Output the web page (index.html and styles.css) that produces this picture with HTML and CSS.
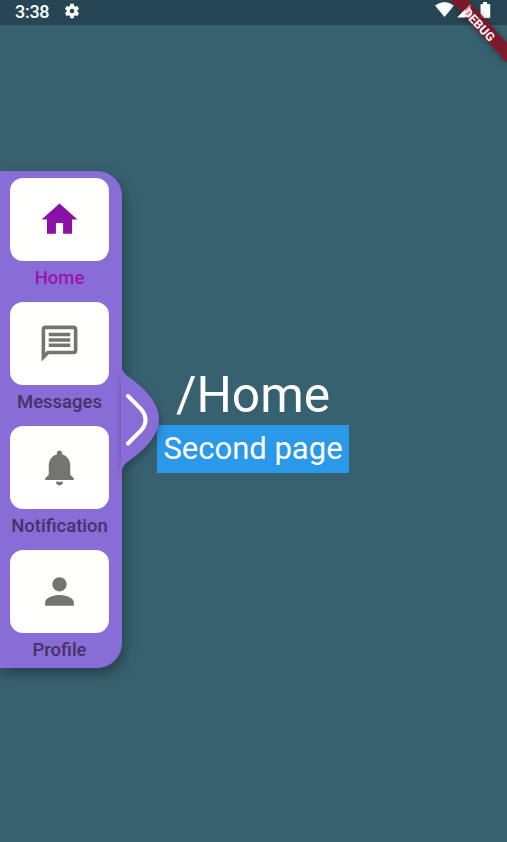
FILE: index.html
```html
<!DOCTYPE html>
<html lang="en">
<head>
<meta charset="utf-8">
<title>Home</title>
<link rel="stylesheet" href="styles.css">
</head>
<body>
<div class="screen">
  <header class="status">
    <span class="time">3:38</span>
    <svg class="gear" viewBox="0 0 24 24"><path d="M19.14 12.94c.04-.3.06-.61.06-.94s-.02-.64-.07-.94l2.03-1.58a.5.5 0 0 0 .12-.61l-1.92-3.32a.5.5 0 0 0-.59-.22l-2.39.96a7 7 0 0 0-1.62-.94l-.36-2.54a.48.48 0 0 0-.48-.41h-3.84a.47.47 0 0 0-.47.41l-.36 2.54c-.59.24-1.13.57-1.62.94l-2.39-.96a.48.48 0 0 0-.59.22L2.74 8.87a.47.47 0 0 0 .12.61l2.03 1.58a6 6 0 0 0 0 1.88l-2.03 1.58a.5.5 0 0 0-.12.61l1.92 3.32c.12.22.37.29.59.22l2.39-.96c.5.38 1.03.7 1.62.94l.36 2.54c.05.24.24.41.48.41h3.84c.24 0 .44-.17.47-.41l.36-2.54a7 7 0 0 0 1.62-.94l2.39.96c.22.08.47 0 .59-.22l1.92-3.32a.47.47 0 0 0-.12-.61zM12 15.100a3.100 3.100 0 1 1 0-6.200 3.100 3.100 0 0 1 0 6.200z"/></svg>
    <svg class="signals" viewBox="0 0 58 20"><path d="M0 5.500Q9.500-1.500 19 5.500L9.500 17Z"/><path d="M48 2h4v2h2.200q1 0 1 1V17q0 1-1 1H46.500q-1 0-1-1V5q0-1 1-1H48Z"/></svg>
  </header>

  <nav class="drawer">
    <a class="item active">
      <span class="card"><svg viewBox="0 0 24 24"><path d="M10 20v-6h4v6h5v-8h3L12 3 2 12h3v8z"/></svg></span>
      <span class="label">Home</span>
    </a>
    <a class="item">
      <span class="card"><svg viewBox="0 0 24 24"><path d="M4 4h16v12H5.170L4 17.170V4m0-2c-1.100 0-1.990.9-1.990 2L2 22l4-4h14c1.100 0 2-.9 2-2V4c0-1.100-.9-2-2-2H4zm2 10h12v2H6v-2zm0-3h12v2H6V9zm0-3h12v2H6V6z"/></svg></span>
      <span class="label">Messages</span>
    </a>
    <a class="item">
      <span class="card"><svg viewBox="0 0 24 24"><path d="M12 22c1.100 0 2-.9 2-2h-4c0 1.100.89 2 2 2zm6-6v-5c0-3.070-1.640-5.640-4.500-6.320V4c0-.83-.67-1.500-1.500-1.500s-1.500.67-1.500 1.500v.68C7.630 5.360 6 7.920 6 11v5l-2 2v1h16v-1l-2-2z"/></svg></span>
      <span class="label">Notification</span>
    </a>
    <a class="item">
      <span class="card"><svg viewBox="0 0 24 24"><path d="M12 12c2.210 0 4-1.790 4-4s-1.790-4-4-4-4 1.790-4 4 1.790 4 4 4zm0 2c-2.670 0-8 1.340-8 4v2h16v-2c0-2.660-5.330-4-8-4z"/></svg></span>
      <span class="label">Profile</span>
    </a>
    <svg class="handle" viewBox="0 0 40 120"><path class="tab" d="M0 4C0 14 2 18 8 22C22 32 38 47 38 64C38 81 22 96 8 106C2 110 0 114 0 124Z"/><path class="chevron" d="M7 41L20 54Q29 65 20 75.500L7 88.500"/></svg>
  </nav>

  <main class="content">
    <h1>/Home</h1>
    <button type="button">Second page</button>
  </main>

  <svg class="banner" viewBox="0 0 67 75"><path class="ribbon" d="M10 0H28L67 43V63Z"/><path class="cell" d="M17 17.500L25 9.500V17.500Z"/><path class="cell-covered" d="M25 9.500L30.500 4V17.500H25Z"/><text x="0" y="4.300" transform="translate(39 25) rotate(47)">DEBUG</text></svg>
</div>
</body>
</html>
```
FILE: styles.css
```css
* { box-sizing: border-box; }
body { margin: 0; font-family: Roboto, sans-serif; }
.screen {
  position: relative;
  width: 507px;
  height: 842px;
  overflow: hidden;
  background: #386170;
}
.status {
  display: flex;
  align-items: flex-start;
  height: 25px;
  padding-left: 15px;
  background: #274655;
  color: #fff;
}
.time { width: 48px; font-size: 18px; line-height: 23px; font-weight: 500; letter-spacing: -.3px; }
.gear { width: 18px; height: 18px; margin-top: 2px; fill: #fff; }
.signals { width: 58px; height: 20px; margin-left: auto; margin-right: 14px; fill: #fff; }
.drawer {
  position: absolute;
  left: 0;
  top: 171px;
  z-index: 2;
  display: flex;
  flex-direction: column;
  gap: 10px;
  width: 122px;
  height: 497px;
  padding: 7px 0 0 10px;
  border-radius: 0 25px 25px 0;
  background: #896dd6;
  box-shadow: 2px 6px 14px rgba(0, 0, 0, .34);
}
.item { width: 99px; height: 114px; color: #443268; }
.card {
  display: flex;
  align-items: center;
  justify-content: center;
  height: 83px;
  border-radius: 13px;
  background: #fffffd;
}
.card svg { width: 43px; height: 43px; fill: #747470; }
.label {
  display: flex;
  justify-content: center;
  padding-top: 6px;
  font-size: 18.5px;
  line-height: 22px;
  font-weight: 500;
  white-space: nowrap;
}
.active { color: #9815a8; }
.active .card svg { fill: #8b10a5; }
.handle {
  position: absolute;
  left: 121px;
  top: 184px;
  width: 40px;
  height: 120px;
  overflow: visible;
}
.tab { fill: #896dd6; filter: drop-shadow(1px 4px 4px rgba(0, 0, 0, .26)); }
.chevron { fill: none; stroke: #fff; stroke-width: 4; stroke-linecap: round; }
.content {
  display: flex;
  flex-direction: column;
  align-items: center;
  padding: 341px 1px 0 0;
  color: #fff;
}
h1 { margin: 0; font-size: 49.7px; line-height: 59px; font-weight: 400; }
button {
  width: 192px;
  height: 48px;
  padding: 0;
  border: 0;
  background: #2b99ea;
  color: #fff;
  font: 400 31px/48px Roboto, sans-serif;
}
.banner {
  position: absolute;
  top: 0;
  right: 0;
  width: 67px;
  height: 75px;
  filter: drop-shadow(0 1px 3px rgba(0, 0, 0, .4));
}
.ribbon { fill: #861426; fill-opacity: .88; }
.cell { fill: #fff; }
.cell-covered { fill: #e3bcbd; fill-opacity: .75; }
.banner text { fill: #f5e8ea; font-size: 12.5px; font-weight: 900; text-anchor: middle; }
```
